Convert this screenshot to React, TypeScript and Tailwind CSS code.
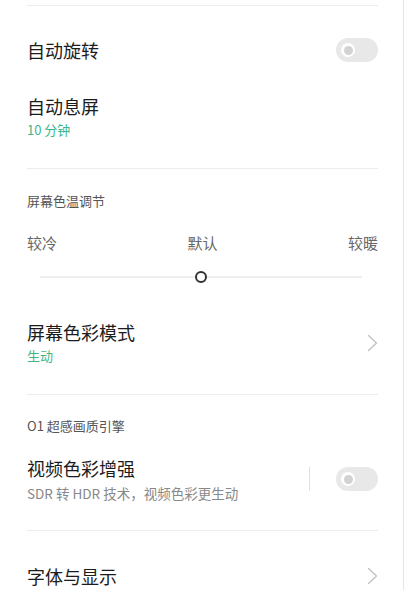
import React from 'react';

const font = { fontFamily: '"Noto Sans CJK SC", "Noto Sans", sans-serif' };

function Toggle() {
  return (
    <div className="relative w-[42px] h-[24px] rounded-full bg-[#e8e8e8] shrink-0">
      <div className="absolute left-[5px] top-[5px] w-[14px] h-[14px] rounded-full bg-white flex items-center justify-center">
        <div className="w-[9px] h-[9px] rounded-full bg-[#d2d2d2]" />
      </div>
    </div>
  );
}

function Chevron() {
  return (
    <svg width="11" height="18" viewBox="0 0 11 18" className="shrink-0">
      <polyline points="1.5,1.5 9.5,9 1.5,16.5" fill="none" stroke="#c2c2c2" strokeWidth="1.4" strokeLinejoin="round" strokeLinecap="round" />
    </svg>
  );
}

function Divider({ className = '' }: { className?: string }) {
  return <div className={`h-px bg-[#ececec] ${className}`} />;
}

export default function App() {
  return (
    <div className="w-[404px] min-h-[590px] bg-white border-r border-[#e4e4e4] overflow-hidden" style={font}>
      <div className="pl-[27px] pr-[25px]">
        <div className="h-[5px]" />
        <Divider />

        {/* auto rotate */}
        <div className="mt-[32px] h-[24px] flex items-center justify-between">
          <span className="text-[18px] leading-[24px] text-[#1c1c1c]">自动旋转</span>
          <Toggle />
        </div>

        {/* auto sleep */}
        <div className="mt-[32px]">
          <div className="text-[18px] leading-[24px] text-[#1c1c1c]">自动息屏</div>
          <div className="mt-[3px] text-[13px] leading-[18px] text-[#3db689]">10 分钟</div>
        </div>

        <Divider className="mt-[29px]" />

        {/* color temperature */}
        <div className="mt-[23px] text-[13px] leading-[18px] text-[#555]">屏幕色温调节</div>
        <div className="mt-[23px] flex justify-between text-[15px] leading-[20px] text-[#666]">
          <span>较冷</span>
          <span>默认</span>
          <span>较暖</span>
        </div>
        <div className="mt-[18px] pl-[13px] pr-[16px]">
          <div className="relative h-[12px] flex items-center">
            <div className="w-full h-[2px] bg-[#eeeeee]" />
            <div className="absolute left-1/2 -translate-x-1/2 w-[12px] h-[12px] rounded-full border-2 border-[#333] bg-white" />
          </div>
        </div>

        {/* color mode */}
        <div className="mt-[37px] flex items-center justify-between">
          <div>
            <div className="text-[18px] leading-[24px] text-[#1c1c1c]">屏幕色彩模式</div>
            <div className="mt-[3px] text-[13px] leading-[18px] text-[#3db689]">生动</div>
          </div>
          <Chevron />
        </div>

        <Divider className="mt-[29px]" />

        {/* O1 engine */}
        <div className="mt-[22px] text-[13px] leading-[18px] text-[#555]">O1 超感画质引擎</div>
        <div className="mt-[21px] flex items-center justify-between">
          <div>
            <div className="text-[18px] leading-[24px] text-[#1c1c1c]">视频色彩增强</div>
            <div className="mt-[4px] text-[13.5px] leading-[18px] text-[#888]">SDR 转 HDR 技术，视频色彩更生动</div>
          </div>
          <div className="flex items-center gap-[26px]">
            <div className="w-px h-[24px] bg-[#e0e0e0]" />
            <Toggle />
          </div>
        </div>

        <Divider className="mt-[28px]" />

        {/* font & display */}
        <div className="mt-[33px] flex items-center justify-between">
          <span className="text-[18px] leading-[24px] text-[#1c1c1c]">字体与显示</span>
          <Chevron />
        </div>
      </div>
    </div>
  );
}
